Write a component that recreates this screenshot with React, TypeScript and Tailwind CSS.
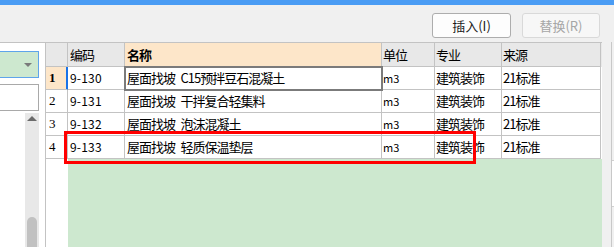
const cols = 'grid grid-cols-[22px_57px_257px_53px_67px_99px]'
const cell = 'flex items-center overflow-hidden whitespace-pre border-r border-b border-[#c3c3c3]'

const rows = [
  { n: '1', code: '9-130', name: '屋面找坡\u2002C15预拌豆石混凝土', unit: 'm3', major: '建筑装饰', src: '21标准' },
  { n: '2', code: '9-131', name: '屋面找坡\u2002干拌复合轻集料', unit: 'm3', major: '建筑装饰', src: '21标准' },
  { n: '3', code: '9-132', name: '屋面找坡\u2002泡沫混凝土', unit: 'm3', major: '建筑装饰', src: '21标准' },
  { n: '4', code: '9-133', name: '屋面找坡\u2002轻质保温垫层', unit: 'm3', major: '建筑装饰', src: '21标准' },
]

function LeftPanel() {
  return (
    <div className="flex w-[45px] shrink-0 flex-col bg-white">
      <div className="-ml-[2px] mt-[8px] flex h-[27px] w-[41px] items-center justify-end border border-[#5fa4ea] bg-[#cde8cf] pr-[6px]">
        <span className="h-0 w-0 border-x-[4px] border-t-[4px] border-x-transparent border-t-[#7a7a7a]" />
      </div>
      <div className="-ml-[2px] mt-[6px] h-[27px] w-[41px] border border-[#a9a9a9] bg-white" />
      <div className="ml-[25px] mt-[2px] flex w-[14px] flex-1 flex-col items-center bg-[#e8e8e8]">
        <span className="mt-[3px] h-0 w-0 border-x-[5px] border-b-[5px] border-x-transparent border-b-[#6b6b6b]" />
        <div className="flex-1" />
        <div className="h-[30px] w-[10px] rounded-t-full bg-[#c1c1c1]" />
      </div>
    </div>
  )
}

function Grid() {
  return (
    <div className="flex w-[557px] shrink-0 flex-col border-l border-[#c3c3c3] bg-white text-[13px] tracking-[-1px] text-black">
      <div className={`${cols} h-[24px] bg-[#e8e8e8]`}>
        <div className={cell} />
        <div className={`${cell} pl-[2px]`}>编码</div>
        <div className={`${cell} bg-[#fde6c9] pl-[2px] font-bold`}>名称</div>
        <div className={`${cell} pl-[1px]`}>单位</div>
        <div className={`${cell} pl-[1px]`}>专业</div>
        <div className={`${cell} pl-[1px]`}>来源</div>
      </div>
      {rows.map((r, i) => (
        <div key={r.n} className={`${cols} h-[23px]`}>
          <div
            className={`${cell} pl-[3px] font-['Liberation_Serif',serif] tracking-normal ${
              i === 0 ? 'bg-[#fde6c9] font-bold border-r-[#1a73e8] shadow-[inset_-1px_0_0_#1a73e8]' : ''
            }`}
          >
            {r.n}
          </div>
          <div className={`${cell} pl-[2px] text-[12px] tracking-[0.2px]`}>{r.code}</div>
          <div
            className={`${cell} pl-[2px] ${
              i === 0 ? 'relative z-10 outline-2 -outline-offset-1 outline-[#7b7b7b]' : ''
            }`}
          >
            {r.name}
          </div>
          <div className={`${cell} pl-[1px] text-[11px] tracking-normal`}>{r.unit}</div>
          <div className={`${cell} pl-[1px]`}>{r.major}</div>
          <div className={`${cell} pl-[1px]`}>{r.src}</div>
        </div>
      ))}
      <div className="flex flex-1">
        <div className="w-[22px] bg-white" />
        <div className="flex-1 bg-[#cde8cf]" />
      </div>
    </div>
  )
}

export default function App() {
  return (
    <div className="relative flex h-[247px] w-[614px] flex-col overflow-hidden bg-[#f0f0f0] font-['Noto_Sans_CJK_SC','Noto_Sans',sans-serif]">
      <div className="h-[5px] shrink-0 bg-[#4a9cf4]" />
      <div className="flex h-[37px] shrink-0 items-start justify-end gap-[11px] pr-[14px] pt-[8px] text-[13px]">
        <button
          type="button"
          className="h-[25px] w-[79px] rounded-[3px] border border-[#adadad] bg-[#fdfdfd] text-[#1a1a1a]"
        >
          插入(I)
        </button>
        <button
          type="button"
          className="h-[25px] w-[78px] rounded-[3px] border border-[#d9d9d9] bg-[#f7f7f7] text-[#a6a6a6]"
        >
          替换(R)
        </button>
      </div>
      <div className="flex min-h-0 flex-1">
        <div className="flex border-t border-[#c3c3c3]">
          <LeftPanel />
          <Grid />
        </div>
        <div className="w-[9px] shrink-0 bg-[#f0f0f0]" />
        <div className="flex flex-1 flex-col border-l border-[#c8c8c8] bg-[#f0f0f0]">
          <div className="mt-[118px] h-[47px] border-y border-[#d0d0d0] bg-white" />
        </div>
      </div>
      <div className="absolute left-[64px] top-[131px] h-[33px] w-[412px] border-[3px] border-[#ff0000]" />
    </div>
  )
}
